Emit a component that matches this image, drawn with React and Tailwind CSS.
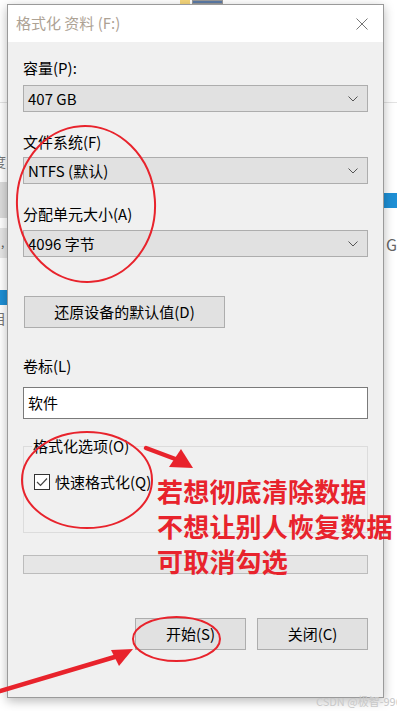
import React from "react";

const font = { fontFamily: '"Microsoft YaHei UI","Noto Sans CJK SC","Noto Sans",sans-serif' };

function Chevron() {
  return (
    <svg width="10" height="6" viewBox="0 0 10 6" className="shrink-0">
      <path d="M0.5 0.5 L5 5 L9.5 0.5" fill="none" stroke="#555" strokeWidth="1" />
    </svg>
  );
}

function Select({ value, className = "" }) {
  return (
    <div className={`flex h-[27px] items-center justify-between border border-[#adadad] bg-[#e1e1e1] pl-[4px] pr-[9px] text-[15px] text-black ${className}`}>
      <span>{value}</span>
      <Chevron />
    </div>
  );
}

export default function App() {
  return (
    <div className="relative h-[711px] w-[397px] overflow-hidden bg-white" style={font}>
      {/* background bits */}
      <div className="absolute left-[180px] top-0 h-[4px] w-[10px] bg-[#f5d57a]" />
      <div className="absolute left-[192px] top-0 h-[4px] w-[31px] border border-[#999] bg-[#5b7aa6]" />
      <div className="absolute left-0 top-[102px] h-px w-[8px] bg-[#e3e3e3]" />
      <div className="absolute right-0 top-[102px] h-px w-[14px] bg-[#e3e3e3]" />
      <div className="absolute left-[-8px] top-[154px] text-[14px] leading-none text-[#777]">度</div>
      <div className="absolute left-0 top-[182px] h-[36px] w-[7px] bg-[#dcdcdc]" />
      <div className="absolute left-0 top-[228px] h-[30px] w-[7px] bg-[#e6e6e6]" />
      <div className="absolute left-[1px] top-[236px] text-[12px] leading-none text-[#555]">,</div>
      <div className="absolute left-0 top-[290px] h-[15px] w-[7px] bg-[#1e8fd5]" />
      <div className="absolute left-[-8px] top-[311px] text-[14px] leading-none text-[#777]">目</div>
      <div className="absolute right-0 top-[193px] h-[15px] w-[14px] bg-[#1e8fd5]" />
      <div className="absolute left-[386px] top-[236px] text-[16px] leading-none text-[#666]">G</div>

      {/* dialog */}
      <div className="absolute left-[7px] top-[4px] flex h-[694px] w-[377px] flex-col border border-[#9a9a9a] bg-[#f0f0f0] shadow-[0_3px_10px_rgba(0,0,0,0.28)]">
        <div className="flex h-[37px] shrink-0 items-center justify-between bg-white pl-[8px] pr-[15px]">
          <span className="text-[15px] text-[#ada294]">格式化 资料 (F:)</span>
          <svg width="12" height="12" viewBox="0 0 12 12">
            <path d="M0.5 0.5 L11.5 11.5 M11.5 0.5 L0.5 11.5" stroke="#777" strokeWidth="1" />
          </svg>
        </div>

        <div className="flex flex-col px-[15px] pt-[16px] text-[15px] leading-[20px] text-black">
          <div>容量(P):</div>
          <Select value="407 GB" className="mt-[7px]" />
          <div className="mt-[20px]">文件系统(F)</div>
          <Select value="NTFS (默认)" className="mt-[5px]" />
          <div className="mt-[20px]">分配单元大小(A)</div>
          <Select value="4096 字节" className="mt-[6px]" />

          <div className="ml-px mt-[39px] flex h-[32px] w-[201px] items-center justify-center border border-[#adadad] bg-[#e1e1e1] text-[15px]">
            还原设备的默认值(D)
          </div>

          <div className="mt-[28px]">卷标(L)</div>
          <div className="mt-[11px] flex h-[32px] items-center border border-[#7a7a7a] bg-white pl-[4px]">软件</div>

          <div className="relative mt-[27px] h-[87px] border border-[#dcdcdc]">
            <div className="absolute left-[8px] top-[-11px] bg-[#f0f0f0] px-px">格式化选项(O)</div>
            <div className="ml-[10px] mt-[25px] flex items-center gap-[5px]">
              <div className="flex h-[16px] w-[16px] items-center justify-center border border-[#333] bg-white">
                <svg width="12" height="10" viewBox="0 0 12 10">
                  <path d="M1 5 L4.5 8.5 L11 1.5" fill="none" stroke="#444" strokeWidth="1.2" />
                </svg>
              </div>
              <span>快速格式化(Q)</span>
            </div>
          </div>

          <div className="mt-[22px] h-[19px] border border-[#bcbcbc] bg-[#e6e6e6]" />

          <div className="mt-[44px] flex justify-end gap-[11px]">
            <div className="flex h-[32px] w-[111px] items-center justify-center border border-[#adadad] bg-[#e1e1e1]">开始(S)</div>
            <div className="flex h-[32px] w-[111px] items-center justify-center border border-[#adadad] bg-[#e1e1e1]">关闭(C)</div>
          </div>
        </div>
      </div>

      {/* annotations */}
      <svg className="pointer-events-none absolute left-0 top-0" width="397" height="711" viewBox="0 0 397 711">
        <g fill="none" stroke="#e8232c" strokeWidth="2">
          <ellipse cx="86" cy="204" rx="69" ry="78" transform="rotate(-4 86 204)" />
          <ellipse cx="87" cy="480" rx="65" ry="48" />
          <ellipse cx="176.5" cy="639" rx="43.5" ry="22" />
        </g>
        <g stroke="#e8232c" strokeWidth="4.5" strokeLinecap="round">
          <line x1="146" y1="448" x2="178" y2="460" />
          <line x1="0" y1="691" x2="118" y2="656" />
        </g>
        <g fill="#e8232c">
          <polygon points="193,468 169,467 181,449" />
          <polygon points="133,649 111,650 119,666" />
        </g>
      </svg>

      <div className="pointer-events-none absolute left-[157px] top-[473px] text-[26px] font-bold leading-[35px] tracking-[0.2px] text-[#e8232c]">
        <div>若想彻底清除数据</div>
        <div>不想让别人恢复数据</div>
        <div>可取消勾选</div>
      </div>

      <div className="absolute left-[316px] top-[693px] whitespace-nowrap text-[11px] text-[#c8c8c8]">CSDN @极智-996</div>
    </div>
  );
}
